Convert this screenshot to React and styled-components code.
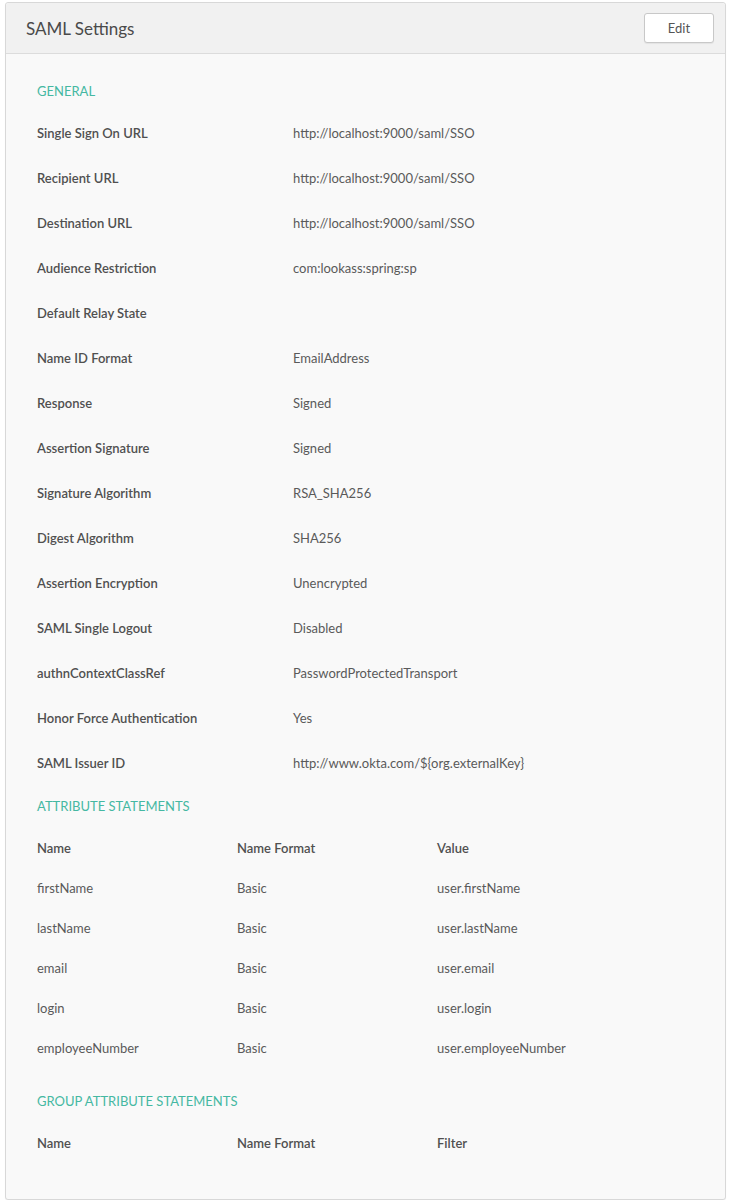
import React from 'react';
import styled, { createGlobalStyle } from 'styled-components';

const GlobalStyle = createGlobalStyle`
    html, body {
        margin: 0;
        padding: 0;
        background: #ffffff;
    }
    body {
        font-family: Lato, "Open Sans", "Liberation Sans", sans-serif;
        color: #333;
    }
`;

const general = [
    ['Single Sign On URL', 'http://localhost:9000/saml/SSO'],
    ['Recipient URL', 'http://localhost:9000/saml/SSO'],
    ['Destination URL', 'http://localhost:9000/saml/SSO'],
    ['Audience Restriction', 'com:lookass:spring:sp'],
    ['Default Relay State', ''],
    ['Name ID Format', 'EmailAddress'],
    ['Response', 'Signed'],
    ['Assertion Signature', 'Signed'],
    ['Signature Algorithm', 'RSA_SHA256'],
    ['Digest Algorithm', 'SHA256'],
    ['Assertion Encryption', 'Unencrypted'],
    ['SAML Single Logout', 'Disabled'],
    ['authnContextClassRef', 'PasswordProtectedTransport'],
    ['Honor Force Authentication', 'Yes'],
    ['SAML Issuer ID', 'http://www.okta.com/${org.externalKey}'],
];

const attributes = [
    ['firstName', 'Basic', 'user.firstName'],
    ['lastName', 'Basic', 'user.lastName'],
    ['email', 'Basic', 'user.email'],
    ['login', 'Basic', 'user.login'],
    ['employeeNumber', 'Basic', 'user.employeeNumber'],
];

const App = () => {
    return (
        <Page>
            <GlobalStyle />
            <Panel>
                <Header>
                    <Title>SAML Settings</Title>
                    <EditButton type="button">Edit</EditButton>
                </Header>
                <Body>
                    <SectionTitle>General</SectionTitle>
                    {general.map(([label, value]) => (
                        <InfoRow key={label}>
                            <Label>{label}</Label>
                            <Value>{value}</Value>
                        </InfoRow>
                    ))}

                    <SectionTitle $top={12}>Attribute Statements</SectionTitle>
                    <TableRow $first>
                        <Head>Name</Head>
                        <Head>Name Format</Head>
                        <Head>Value</Head>
                    </TableRow>
                    {attributes.map(([name, format, value]) => (
                        <TableRow key={name}>
                            <Cell>{name}</Cell>
                            <Cell>{format}</Cell>
                            <Cell>{value}</Cell>
                        </TableRow>
                    ))}

                    <SectionTitle $top={24}>Group Attribute Statements</SectionTitle>
                    <TableRow $first>
                        <Head>Name</Head>
                        <Head>Name Format</Head>
                        <Head>Filter</Head>
                    </TableRow>
                </Body>
            </Panel>
        </Page>
    );
}

const Page = styled.div`
    padding: 2px 6px 0 5px;
`

const Panel = styled.div`
    border: 1px solid #d8d8d8;
    border-radius: 3px;
    background: #f9f9f9;
    box-shadow: 0 1px 1px rgba(0, 0, 0, 0.05);
`

const Header = styled.div`
    display: flex;
    align-items: center;
    justify-content: space-between;
    height: 50px;
    padding: 0 11px 0 20px;
    background: #f1f1f1;
    border-bottom: 1px solid #dcdcdc;
    border-radius: 3px 3px 0 0;
`

const Title = styled.h2`
    margin: 0;
    font-size: 17px;
    font-weight: 400;
    color: #4a4a4a;
`

const EditButton = styled.button`
    width: 70px;
    height: 30px;
    background: #fff;
    border: 1px solid #c8c8c8;
    border-radius: 3px;
    box-shadow: 0 1px 1px rgba(0, 0, 0, 0.06);
    font-family: inherit;
    font-size: 13px;
    color: #555;
    cursor: pointer;
`

const Body = styled.div`
    padding: 28px 31px 36px 31px;
`

const SectionTitle = styled.h3`
    margin: ${p => p.$top || 0}px 0 10px;
    height: 18px;
    line-height: 18px;
    font-size: 13px;
    font-weight: 400;
    text-transform: uppercase;
    color: #45b8a2;
`

const InfoRow = styled.div`
    display: grid;
    grid-template-columns: 256px 1fr;
    align-items: center;
    height: 45px;
    font-size: 13px;
`

const Label = styled.div`
    font-weight: 600;
    color: #505050;
`

const Value = styled.div`
    color: #5a5a5a;
`

const TableRow = styled.div`
    display: grid;
    grid-template-columns: 200px 200px 1fr;
    align-items: center;
    height: 40px;
    font-size: 13px;
    margin-top: ${p => (p.$first ? 13 : 0)}px;
`

const Head = styled.div`
    font-weight: 600;
    color: #505050;
`

const Cell = styled.div`
    color: #5a5a5a;
`

export default App;
